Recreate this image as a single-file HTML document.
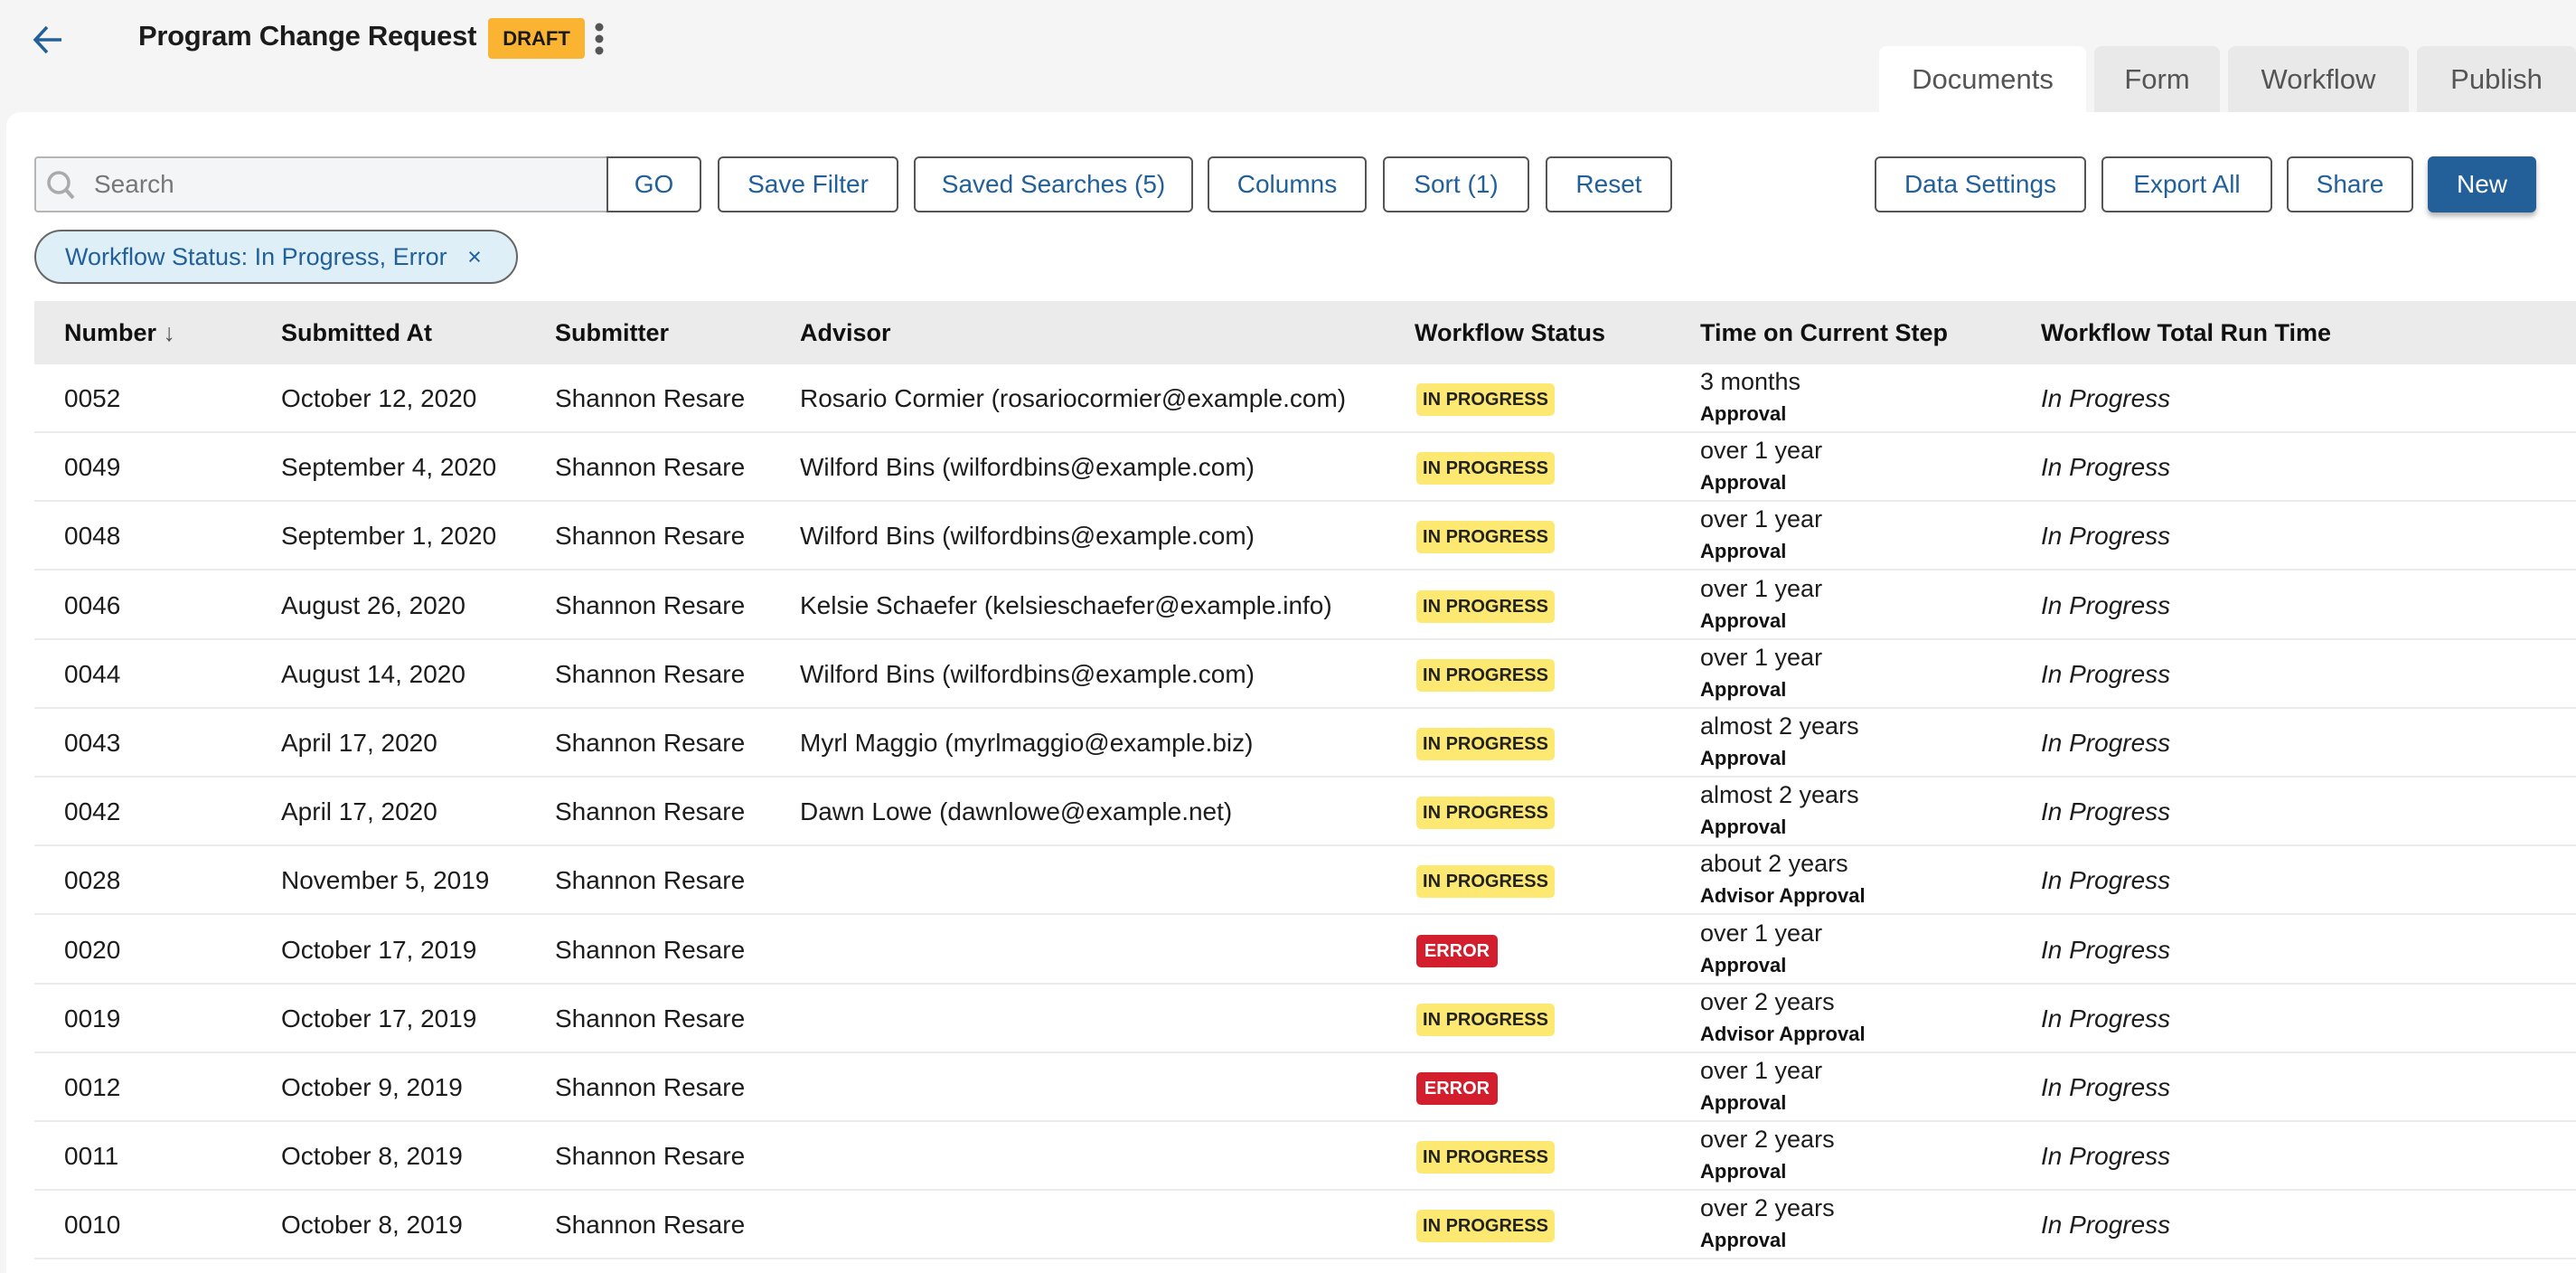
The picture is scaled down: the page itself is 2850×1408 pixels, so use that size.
<!DOCTYPE html>
<html><head><meta charset="utf-8"><style>
*{box-sizing:border-box;margin:0;padding:0}
body{width:2850px;height:1408px;overflow:hidden;background:#f5f5f5;font-family:"Liberation Sans",Arial,sans-serif;color:#1a1a1a;position:relative}
.abs{position:absolute}
.title{left:153px;top:22px;font-size:31px;font-weight:bold;color:#1c1c1c;letter-spacing:-0.3px}
.draft{left:540px;top:20px;width:107px;height:45px;background:#fbb332;border-radius:4px;font-size:22px;font-weight:bold;text-align:center;line-height:45px}
.tab{top:51px;height:73px;border-radius:8px 8px 0 0;background:#e9e9e9;font-size:31px;color:#555;text-align:center;line-height:73px}
.panel{left:7px;top:124px;width:2843px;height:1284px;background:#fff;border-radius:16px 0 0 0}
.btn{top:173px;height:62px;border:2px solid #555;border-radius:6px;background:#fff;color:#22609a;font-size:28px;text-align:center;line-height:58px;font-weight:500}
.search{left:38px;top:173px;width:634px;height:62px;border:2px solid #b5b5b5;border-right:none;border-radius:4px 0 0 4px;background:#f4f5f7;font-size:28px;color:#777;line-height:58px;padding-left:64px}
.chip{left:38px;top:254px;width:535px;height:60px;border:2px solid #666;border-radius:30px;background:#dfeff7;color:#22609a;font-size:27px;line-height:56px;padding-left:32px}
.thead{left:38px;top:333px;width:2812px;height:70px;background:#ebebeb}
.th{top:333px;line-height:70px;font-size:27px;font-weight:bold;color:#111}
.row{left:38px;width:2812px;height:76px;border-bottom:2px solid #ebebeb}
.c{font-size:28px;color:#1c1c1c;line-height:76px}
.b{top:0;height:36px;border-radius:5px;font-size:20px;font-weight:bold;line-height:36px;text-align:center}
.ip{background:#fde972;color:#222;width:153px}
.er{background:#d31f2d;color:#fff;width:90px}
.t1{font-size:27px;color:#1c1c1c;line-height:30px}
.t2{font-size:22px;font-weight:bold;color:#111;line-height:26px}
</style></head><body>
<svg class="abs" style="left:34px;top:24px" width="40" height="40" viewBox="0 0 40 40"><path d="M34 20H6M18 6L5 20l13 14" fill="none" stroke="#22609a" stroke-width="3.5"/></svg>
<div class="abs title">Program Change Request</div>
<div class="abs draft">DRAFT</div>
<svg class="abs" style="left:656px;top:24px" width="14" height="40"><circle cx="7" cy="6" r="4.5" fill="#555"/><circle cx="7" cy="19" r="4.5" fill="#555"/><circle cx="7" cy="32" r="4.5" fill="#555"/></svg>
<div class="abs tab" style="left:2079px;width:229px;background:#fff">Documents</div>
<div class="abs tab" style="left:2317px;width:139px">Form</div>
<div class="abs tab" style="left:2465px;width:200px">Workflow</div>
<div class="abs tab" style="left:2674px;width:176px">Publish</div>
<div class="abs panel"></div>
<div class="abs search">Search</div>
<svg class="abs" style="left:50px;top:187px" width="36" height="36" viewBox="0 0 36 36"><circle cx="15" cy="15" r="11" fill="none" stroke="#aaa" stroke-width="3.5"/><path d="M23 23l8 9" stroke="#aaa" stroke-width="4"/></svg>
<div class="abs btn" style="left:671px;width:105px;border-radius:0 6px 6px 0">GO</div>
<div class="abs btn" style="left:794px;width:200px">Save Filter</div>
<div class="abs btn" style="left:1011px;width:309px">Saved Searches (5)</div>
<div class="abs btn" style="left:1336px;width:176px">Columns</div>
<div class="abs btn" style="left:1530px;width:162px">Sort (1)</div>
<div class="abs btn" style="left:1710px;width:140px">Reset</div>
<div class="abs btn" style="left:2074px;width:234px">Data Settings</div>
<div class="abs btn" style="left:2325px;width:189px">Export All</div>
<div class="abs btn" style="left:2530px;width:140px">Share</div>
<div class="abs btn" style="left:2686px;width:120px;background:#235f98;border-color:#235f98;color:#fff;box-shadow:0 4px 6px rgba(0,0,0,.3)">New</div>
<div class="abs chip">Workflow Status: In Progress, Error &nbsp;&nbsp;×</div>
<div class="abs thead"></div>
<div class="abs th" style="left:71px">Number <span style="font-weight:normal;color:#555">↓</span></div>
<div class="abs th" style="left:311px">Submitted At</div>
<div class="abs th" style="left:614px">Submitter</div>
<div class="abs th" style="left:885px">Advisor</div>
<div class="abs th" style="left:1565px">Workflow Status</div>
<div class="abs th" style="left:1881px">Time on Current Step</div>
<div class="abs th" style="left:2258px">Workflow Total Run Time</div>
<div id="rows"></div>
<script>
var d=[["0052","October 12, 2020","Rosario Cormier (rosariocormier@example.com)",1,"3 months","Approval"],
["0049","September 4, 2020","Wilford Bins (wilfordbins@example.com)",1,"over 1 year","Approval"],
["0048","September 1, 2020","Wilford Bins (wilfordbins@example.com)",1,"over 1 year","Approval"],
["0046","August 26, 2020","Kelsie Schaefer (kelsieschaefer@example.info)",1,"over 1 year","Approval"],
["0044","August 14, 2020","Wilford Bins (wilfordbins@example.com)",1,"over 1 year","Approval"],
["0043","April 17, 2020","Myrl Maggio (myrlmaggio@example.biz)",1,"almost 2 years","Approval"],
["0042","April 17, 2020","Dawn Lowe (dawnlowe@example.net)",1,"almost 2 years","Approval"],
["0028","November 5, 2019","",1,"about 2 years","Advisor Approval"],
["0020","October 17, 2019","",0,"over 1 year","Approval"],
["0019","October 17, 2019","",1,"over 2 years","Advisor Approval"],
["0012","October 9, 2019","",0,"over 1 year","Approval"],
["0011","October 8, 2019","",1,"over 2 years","Approval"],
["0010","October 8, 2019","",1,"over 2 years","Approval"]];
var h="";
d.forEach(function(r,i){var t=403+i*76.2;
h+='<div class="abs row" style="top:'+t+'px"></div>';
h+='<div class="abs c" style="top:'+t+'px;left:71px">'+r[0]+'</div>';
h+='<div class="abs c" style="top:'+t+'px;left:311px">'+r[1]+'</div>';
h+='<div class="abs c" style="top:'+t+'px;left:614px">Shannon Resare</div>';
h+='<div class="abs c" style="top:'+t+'px;left:885px">'+r[2]+'</div>';
h+='<div class="abs b '+(r[3]?'ip':'er')+'" style="top:'+(t+21)+'px;left:1567px">'+(r[3]?'IN PROGRESS':'ERROR')+'</div>';
h+='<div class="abs t1" style="top:'+(t+4)+'px;left:1881px">'+r[4]+'</div>';
h+='<div class="abs t2" style="top:'+(t+42)+'px;left:1881px">'+r[5]+'</div>';
h+='<div class="abs c" style="top:'+t+'px;left:2258px;font-style:italic">In Progress</div>';});
document.getElementById("rows").innerHTML=h;
</script>
</body></html>
